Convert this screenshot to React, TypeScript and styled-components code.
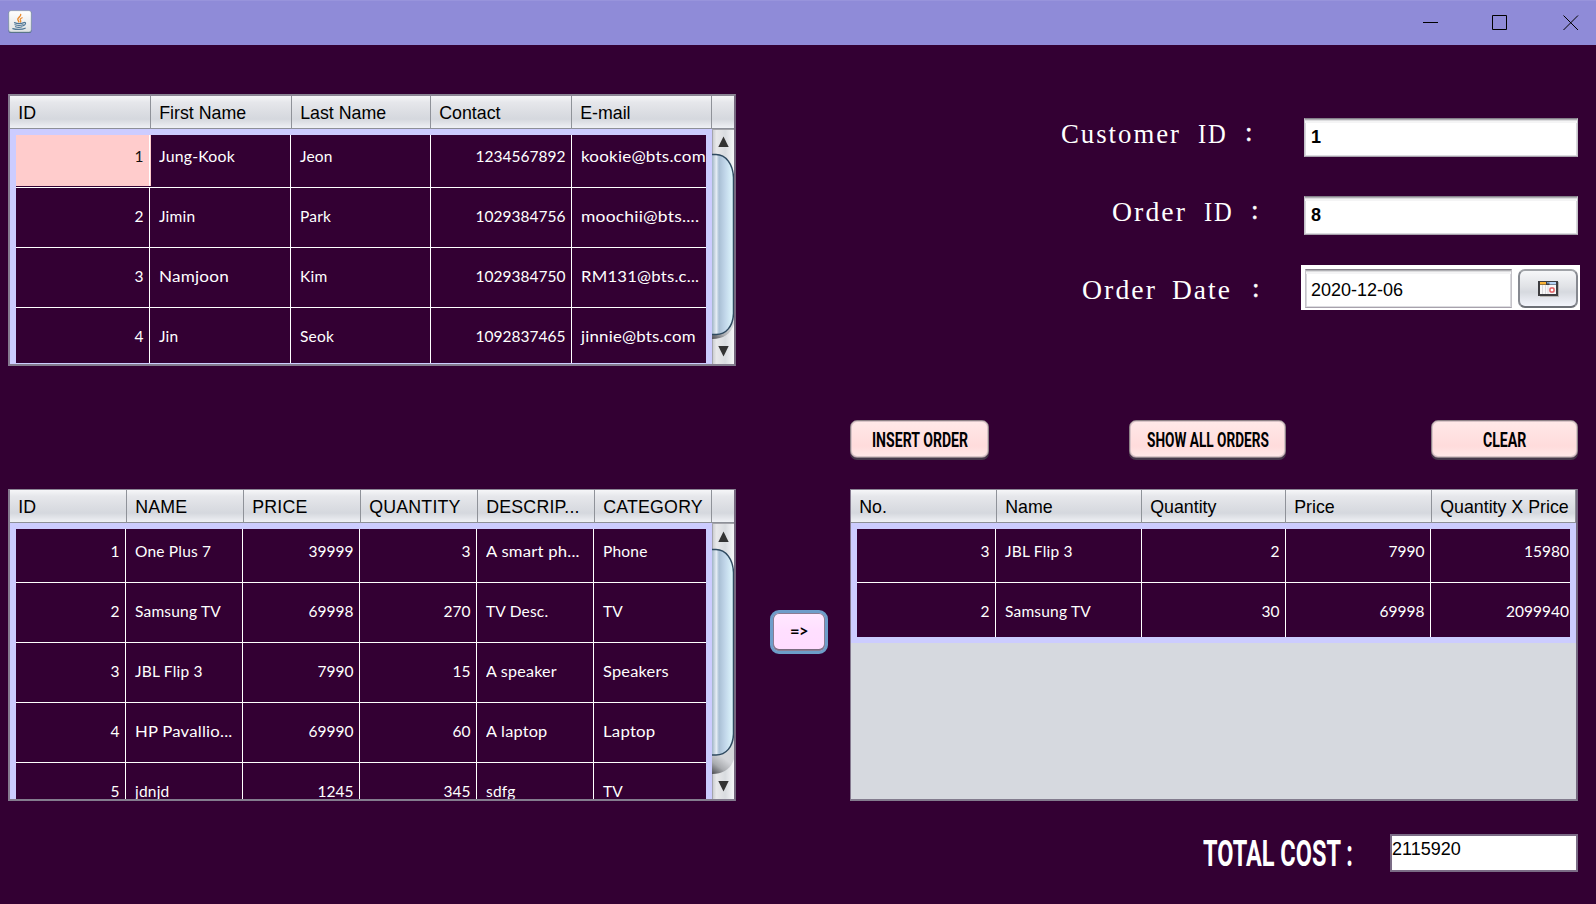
import React, { useLayoutEffect, useRef, useState } from "react";
import styled, { createGlobalStyle, css } from "styled-components";

const GlobalStyle = createGlobalStyle`
  *, *::before, *::after { box-sizing: border-box; }
  body { margin: 0; background: #330033; overflow: hidden; }
`;

const arial = `"Liberation Sans", Arial, sans-serif`;

/* ---------- window frame ---------- */

const Window = styled.div`
  display: flex;
  flex-direction: column;
  width: 1596px;
  height: 904px;
  background: #330033;
  font-family: ${arial};
  font-size: 18px;
  color: #000;
`;

const TitleBar = styled.header`
  display: flex;
  justify-content: space-between;
  flex: none;
  height: 45px;
  padding: 9px 17px 0 8px;
  background: #8f8bd8;
  border-top: 1px solid #9894dc;
`;

const WindowControls = styled.div`
  display: grid;
  grid-template-columns: 69px 71px 16px;
  padding-top: 5px;
`;

const ControlIcon = styled.svg`
  display: block;
  width: 16px;
  height: 16px;
  fill: none;
  stroke: #000;
`;

const Content = styled.main`
  display: flex;
  flex: 1;
  padding-left: 8px;
`;

const LeftColumn = styled.div`
  display: flex;
  flex-direction: column;
  gap: 123px;
  width: 728px;
  padding-top: 49px;
`;

const MiddleColumn = styled.div`
  width: 114px;
  padding: 565px 0 0 34px;
`;

const RightColumn = styled.div`
  display: flex;
  flex-direction: column;
  width: 728px;
  padding-top: 73px;
`;

/* ---------- text stretched to a set width ---------- */

const FitBox = styled.span<{ $w: number; $ml: number }>`
  display: block;
  flex: none;
  width: ${(p) => p.$w}px;
  margin-left: ${(p) => p.$ml}px;
  white-space: pre;
`;

const FitInner = styled.span`
  display: inline-block;
  transform-origin: 0 50%;
`;

function Fit({ width, ml = 0, children }: { width: number; ml?: number; children: string }) {
  const ref = useRef<HTMLSpanElement>(null);
  const [scale, setScale] = useState(1);
  useLayoutEffect(() => {
    if (ref.current) setScale(width / ref.current.offsetWidth);
  }, [width, children]);
  return (
    <FitBox $w={width} $ml={ml}>
      <FitInner ref={ref} style={{ transform: `scaleX(${scale})` }}>
        {children}
      </FitInner>
    </FitBox>
  );
}

/* ---------- tables ---------- */

const Panel = styled.section<{ $h: number; $thinLeft?: boolean; $top: number }>`
  display: flex;
  flex-direction: column;
  flex: none;
  height: ${(p) => p.$h}px;
  background: #d6d9df;
  border: 2px solid #7b6c86;
  border-top-width: ${(p) => p.$top}px;
  border-left-width: ${(p) => (p.$thinLeft ? 1 : 2)}px;
  border-color: #8b8594 #75687f #837c8e #85798f;
`;

const HeaderRow = styled.div<{ $cols: string; $spacing?: number }>`
  display: grid;
  grid-template-columns: ${(p) => p.$cols};
  flex: none;
  height: 33px;
  background: linear-gradient(#f6f6f8 0, #e6e7eb 20%, #dcdee3 50%, #d5d8de 72%, #e4e6eb 88%, #eff1f5 100%);
  border-bottom: 1px solid #8d9098;
  letter-spacing: ${(p) => p.$spacing ?? 0}px;
`;

const HeaderCell = styled.div`
  padding-left: 8.2px;
  line-height: 34px;
  font-size: 17.8px;
  white-space: pre;
  border-right: 1px solid #8f9299;
`;

const Body = styled.div`
  display: flex;
  flex: 1;
  min-height: 0;
`;

const Viewport = styled.div`
  flex: 1;
  min-width: 0;
  overflow: hidden;
`;

const Grid = styled.div<{ $h?: number; $bottom: number }>`
  height: ${(p) => (p.$h ? `${p.$h}px` : "100%")};
  border: solid #ccccff;
  border-width: 6px 6px ${(p) => p.$bottom}px;
  background: #330033;
  overflow: hidden;
`;

const Row = styled.div<{ $cols: string; $lift?: number }>`
  display: grid;
  grid-template-columns: ${(p) => p.$cols};
  height: 60px;
  margin-top: ${(p) => -(p.$lift ?? 0)}px;
  border-bottom: 1px solid #fff;
`;

const Cell = styled.div<{ $num?: boolean; $selected?: boolean; $last?: boolean; $tight?: boolean }>`
  height: ${(p) => (p.$selected ? 58 : 59)}px;
  padding: 0 ${(p) => (p.$tight ? 1 : p.$num ? 5.5 : 0)}px 0 9px;
  border-right: ${(p) => (p.$last ? "0" : "1px solid #fff")};
  font-family: Lato, sans-serif;
  font-size: 15.5px;
  line-height: 57px;
  letter-spacing: ${(p) => (p.$num ? 0 : 0.2)}px;
  text-align: ${(p) => (p.$num ? "right" : "left")};
  white-space: pre;
  color: #fff;
  ${(p) =>
    p.$selected &&
    css`
      background: #ffcccc;
      color: #111;
      box-shadow: 1px 0 0 #ffcccc;
    `}
`;

/* ---------- scroll bar ---------- */

const ScrollSvg = styled.svg`
  display: block;
  flex: none;
  width: 22px;
`;

interface ScrollProps {
  h: number;
  up: number;
  top: number;
  bottom: number;
  shade: number;
  down: number;
}

function ScrollBar({ h, up, top, bottom, shade, down }: ScrollProps) {
  const id = `s${h}`;
  const thumb = `M-2 ${top} H4 C14 ${top} 21 ${top + 10} 21.5 ${top + 23} V${bottom - 21} C21 ${bottom - 8} 14 ${bottom} 4 ${bottom} H-2 Z`;
  return (
    <ScrollSvg viewBox={`0 0 22 ${h}`} height={h}>
      <defs>
        <linearGradient id={`${id}t`} x1="0" x2="1" y1="0" y2="0">
          <stop offset="0" stopColor="#c4c6ca" />
          <stop offset=".2" stopColor="#e8e8ea" />
          <stop offset=".6" stopColor="#d9dce0" />
          <stop offset="1" stopColor="#f6f6f8" />
        </linearGradient>
        <linearGradient id={`${id}b`} gradientUnits="userSpaceOnUse" x1="0" x2="22" y1="0" y2="0">
          <stop offset="0" stopColor="#9fb4c6" />
          <stop offset=".2" stopColor="#e6edf5" />
          <stop offset=".32" stopColor="#a9bfd4" />
          <stop offset=".6" stopColor="#c2d7ea" />
          <stop offset="1" stopColor="#e2fbff" />
        </linearGradient>
        <linearGradient id={`${id}s`} gradientUnits="userSpaceOnUse" x1="0" x2="12" y1={shade} y2={shade - 16}>
          <stop offset="0" stopColor="#4c4c50" />
          <stop offset=".5" stopColor="#a9abaf" />
          <stop offset="1" stopColor="#d4d6da" />
        </linearGradient>
      </defs>
      <rect width="22" height={h} fill={`url(#${id}t)`} />
      <path d={`M0 .5H22M.5 0V${h}`} stroke="#a4a5ab" />
      <path d={`M0 ${bottom - 20} H22 V${shade - 15} C19 ${shade - 5} 11 ${shade} 0 ${shade} Z`} fill={`url(#${id}s)`} />
      <path d={thumb} fill={`url(#${id}b)`} stroke="#2f4a60" strokeWidth="1.5" />
      <path d={`M11.5 ${up} L16.7 ${up + 10.5} H6.3 Z`} fill="#333" />
      <path d={`M11.5 ${down + 10.5} L16.7 ${down} H6.3 Z`} fill="#333" />
    </ScrollSvg>
  );
}

/* ---------- generic data table ---------- */

/* a value, or a value with the width it takes in its cell */
type Value = string | [string, number];

interface TableProps {
  height: number;
  topBorder: number;
  thinLeft?: boolean;
  headers: string[];
  headerCols: string;
  headerSpacing?: number;
  cols: string;
  numeric: boolean[];
  rows: Value[][];
  lift: number;
  gridHeight?: number;
  gridBottom?: number;
  selected?: boolean;
  tightEnd?: boolean;
  scroll?: ScrollProps;
}

function DataTable(t: TableProps) {
  return (
    <Panel $h={t.height} $top={t.topBorder} $thinLeft={t.thinLeft}>
      <HeaderRow $cols={t.headerCols} $spacing={t.headerSpacing}>
        {t.headers.map((h) => (
          <HeaderCell key={h}>{h}</HeaderCell>
        ))}
      </HeaderRow>
      <Body>
        <Viewport>
          <Grid $h={t.gridHeight} $bottom={t.gridBottom ?? 0}>
            {t.rows.map((row, r) => (
              <Row key={r} $cols={t.cols} $lift={r === 0 ? t.lift : 0}>
                {row.map((value, c) => (
                  <Cell
                    key={c}
                    $num={t.numeric[c]}
                    $selected={t.selected && r === 0 && c === 0}
                    $last={c === row.length - 1}
                    $tight={t.tightEnd && c === row.length - 1}
                  >
                    {typeof value === "string" ? value : <Fit width={value[1]}>{value[0]}</Fit>}
                  </Cell>
                ))}
              </Row>
            ))}
          </Grid>
        </Viewport>
        {t.scroll && <ScrollBar {...t.scroll} />}
      </Body>
    </Panel>
  );
}

/* ---------- form ---------- */

const FormRow = styled.div<{ $h: number; $gap: number; $right: number; $mt?: number }>`
  display: flex;
  justify-content: flex-end;
  gap: ${(p) => p.$gap}px;
  height: ${(p) => p.$h}px;
  margin: ${(p) => p.$mt ?? 0}px ${(p) => p.$right}px 0 0;
`;

const Label = styled.div<{ $shift: number }>`
  display: flex;
  gap: 15px;
  margin-top: ${(p) => p.$shift}px;
  height: 32px;
  font: 27px/32px "Liberation Serif", "Times New Roman", serif;
  letter-spacing: 2px;
  color: #fff;
`;

const Colon = styled.div<{ $ml: number }>`
  width: 9px;
  margin-left: ${(p) => p.$ml}px;
  line-height: 29px;
  -webkit-text-stroke: 0.4px #fff;
`;

const Field = styled.div<{ $w: number; $h: number; $bold?: boolean }>`
  width: ${(p) => p.$w}px;
  height: ${(p) => p.$h}px;
  padding-left: ${(p) => (p.$bold ? 6 : 5)}px;
  font-size: 18px;
  font-weight: ${(p) => (p.$bold ? 700 : 400)};
  line-height: ${(p) => p.$h + (p.$bold ? -3 : 1)}px;
  background: #fff;
  border: 1px solid #c4c2c8;
  border-top-color: #85808a;
  border-bottom-color: #a7a1ac;
  box-shadow: inset 0 1px 0 #b0b0b4, inset 0 2px 0 #dcdcde, inset 0 4px 0 #f4f4f5, inset 1px 0 0 #d8d8dc,
    inset -1px 0 0 #d8d8dc, inset 0 -1px 0 #dcdce0;
`;

const DatePanel = styled.div`
  display: flex;
  gap: 6px;
  width: 279px;
  height: 45px;
  padding: 4px 2px 2px 4px;
  background: #fff;
`;

const CalendarButton = styled.button`
  display: flex;
  align-items: center;
  justify-content: center;
  width: 60px;
  height: 39px;
  padding: 0;
  border: 2px solid #83868d;
  border-color: #a0a3a8 #868990 #6c6f76;
  border-radius: 7px;
  background: linear-gradient(#f6f7f9, #e0e2e6 45%, #d6d9df 60%, #f3f5fc);
`;

/* ---------- buttons ---------- */

const ButtonBar = styled.div`
  display: grid;
  grid-template-columns: 279px 302px 147px;
  height: 38px;
  margin-top: 110px;
`;

const PinkButton = styled.button<{ $w: number }>`
  display: flex;
  align-items: center;
  justify-content: center;
  width: ${(p) => p.$w}px;
  height: 38px;
  padding: 1px 0 0;
  border: 1px solid #8e8287;
  border-radius: 7px;
  background: linear-gradient(#ffe9e9, #ffe0e0 45%, #ffdcdc 70%, #ffe8e8);
  box-shadow: 0 2px 0 #45384a, inset 0 0 0 1px #d9c4c8;
  font: 700 21px/30px Roboto, "Liberation Sans", sans-serif;
  color: #000;
`;

const ArrowButton = styled.button`
  width: 58px;
  height: 44px;
  padding: 0 0 2px;
  border: 3px solid #6d9dc9;
  border-radius: 9px;
  background: linear-gradient(#ffe9ff, #ffdfff 45%, #ffdcff);
  box-shadow: inset 0 0 0 1px #8a7c92, inset 0 -1px 0 1px #7a6c80;
  font: 700 16.5px/34px Lato, sans-serif;
  letter-spacing: -0.5px;
  color: #000;
`;

const OrderTable = styled.div`
  margin-top: 31px;
`;

const TotalRow = styled.div`
  display: flex;
  justify-content: flex-end;
  gap: 37px;
  height: 38px;
  margin-top: 33px;
`;

const TotalLabel = styled.div`
  font: 700 36.5px/39px Roboto, "Liberation Sans", sans-serif;
  color: #fff;
`;

const TotalBox = styled.div`
  width: 188px;
  height: 38px;
  border: 2px solid #7b6c86;
  background: #fff;
  font-size: 18px;
  line-height: 27px;
`;

const JavaIcon = () => (
  <svg width="24" height="24" viewBox="0 0 24 24">
    <defs>
      <linearGradient id="jb" x1="0" x2="0" y1="0" y2="1">
        <stop offset="0" stopColor="#fff" />
        <stop offset="1" stopColor="#dfe3e3" />
      </linearGradient>
    </defs>
    <rect x=".5" y=".7" width="23" height="22.4" rx="2.5" fill="#4e6d82" />
    <rect x=".8" y=".7" width="22.4" height="21.2" rx="2.2" fill="url(#jb)" stroke="#8fa0a8" strokeWidth=".5" />
    <g fill="none" strokeLinecap="round">
      <path d="M12.7 4.5c.5 2.3-3.400 2.900-2.900 5.100.2.900.9 1.400 1 2.200" stroke="#e98a2e" strokeWidth="1.400" />
      <path d="M14.200 7.800c-2 .900-2.600 1.700-1.500 2.900.3.500.1.900-.3 1.300" stroke="#e98a2e" strokeWidth="1.200" />
      <path d="M6.500 12.600c2.500 1 7 .9 9.500 0M7 14.700c2.500.8 5.500.8 8 0M7.500 16.700c2 .8 4.500.8 6.500 0M16.300 12.500c2-.5 1.500 2.300-1 3.200M4.800 18.600c3.200 1.200 9.200 1.200 12.400-.4" stroke="#4f7796" strokeWidth="1.200" />
    </g>
  </svg>
);

const CalendarIcon = () => (
  <svg width="21" height="16" viewBox="0 0 21 16">
    <path d="M2 1h19v15H2z" fill="#b8b6b2" />
    <path d="M0 0h20v15H0z" fill="#3d3d40" />
    <path d="M2 4h16v9H2z" fill="#f7f7f7" />
    <path d="M2 1h6v2.500H2z" fill="#f9b234" />
    <path d="M9 1h3v1.500H9z" fill="#7d9fc4" />
    <path d="M11.500 1H18v2.500h-6.500z" fill="#b5d3f5" />
    <path d="M4.500 4v9M7.500 4v9M10 4v9" stroke="#d9d9dc" />
    <rect x="12" y="7" width="4" height="4" rx="1" fill="#fff" stroke="#e05a5e" strokeWidth="1.500" />
  </svg>
);

export default function App() {
  return (
    <Window>
      <GlobalStyle />
      <TitleBar>
        <JavaIcon />
        <WindowControls>
          <ControlIcon viewBox="0 0 16 16">
            <path d="M0 7.500H15" />
          </ControlIcon>
          <ControlIcon viewBox="0 0 16 16">
            <path d="M.5.5H14.500V14.500H.5Z" />
          </ControlIcon>
          <ControlIcon viewBox="0 0 16 16">
            <path d="M.5.5L15 15M15 .5L.5 15" />
          </ControlIcon>
        </WindowControls>
      </TitleBar>
      <Content>
        <LeftColumn>
          <DataTable
            height={272}
            topBorder={2}
            headers={["ID", "First Name", "Last Name", "Contact", "E-mail"]}
            headerCols="141px 141px 139px 141px 140px"
            cols="134px 141px 140px 141px 134px"
            numeric={[true, false, false, true, false]}
            lift={7}
            gridBottom={1}
            selected
            rows={[
              ["1", ["Jung-Kook", 75.5], "Jeon", "1234567892", ["kookie@bts.com", 125]],
              ["2", "Jimin", "Park", "1029384756", ["moochii@bts....", 118]],
              ["3", ["Namjoon", 69.5], "Kim", "1029384750", ["RM131@bts.c...", 118.5]],
              ["4", "Jin", "Seok", "1092837465", ["jinnie@bts.com", 115]],
            ]}
            scroll={{ h: 235, up: 7.5, top: 25.5, bottom: 205.5, shade: 210, down: 217 }}
          />
          <DataTable
            height={312}
            topBorder={1}
            headers={["ID", "NAME", "PRICE", "QUANTITY", "DESCRIP...", "CATEGORY"]}
            headerCols="repeat(6, 117px)"
            headerSpacing={0.2}
            cols="110px repeat(4, 117px) 112px"
            numeric={[true, false, true, true, false, false]}
            lift={6}
            rows={[
              ["1", "One Plus 7", "39999", "3", ["A smart ph...", 93.5], "Phone"],
              ["2", "Samsung TV", "69998", "270", "TV Desc.", "TV"],
              ["3", "JBL Flip 3", "7990", "15", ["A speaker", 70.5], ["Speakers", 65.5]],
              ["4", ["HP Pavallio...", 97], "69990", "60", ["A laptop", 62], ["Laptop", 52]],
              ["5", "jdnjd", "1245", "345", "sdfg", "TV"],
            ]}
            scroll={{ h: 276, up: 8.5, top: 26.5, bottom: 232, shade: 251, down: 258 }}
          />
        </LeftColumn>
        <MiddleColumn>
          <ArrowButton>=&gt;</ArrowButton>
        </MiddleColumn>
        <RightColumn>
          <FormRow $h={39} $gap={50} $right={0}>
            <Label $shift={0}>
              <Fit width={120}>Customer</Fit>
              <Fit width={30} ml={2}>ID</Fit>
              <Colon $ml={2}>:</Colon>
            </Label>
            <Field $w={274} $h={39} $bold>
              1
            </Field>
          </FormRow>
          <FormRow $h={39} $gap={44} $right={0} $mt={39}>
            <Label $shift={0}>
              <Fit width={75}>Order</Fit>
              <Fit width={30} ml={2}>ID</Fit>
              <Colon $ml={2}>:</Colon>
            </Label>
            <Field $w={274} $h={39} $bold>
              8
            </Field>
          </FormRow>
          <FormRow $h={45} $gap={40} $right={-2} $mt={30}>
            <Label $shift={9}>
              <Fit width={75}>Order</Fit>
              <Fit width={60}>Date</Fit>
              <Colon $ml={5}>:</Colon>
            </Label>
            <DatePanel>
              <Field $w={207} $h={39}>
                2020-12-06
              </Field>
              <CalendarButton>
                <CalendarIcon />
              </CalendarButton>
            </DatePanel>
          </FormRow>
          <ButtonBar>
            <PinkButton $w={139}>
              <Fit width={96}>INSERT ORDER</Fit>
            </PinkButton>
            <PinkButton $w={157}>
              <Fit width={122}>SHOW ALL ORDERS</Fit>
            </PinkButton>
            <PinkButton $w={147}>
              <Fit width={43}>CLEAR</Fit>
            </PinkButton>
          </ButtonBar>
          <OrderTable>
            <DataTable
              height={312}
              topBorder={1}
              thinLeft
              headers={["No.", "Name", "Quantity", "Price", "Quantity X Price"]}
              headerCols="146px 145px 144px 146px 144px"
              cols="139px 146px 144px 145px 139px"
              numeric={[true, false, true, true, true]}
              lift={6}
              gridHeight={120}
              gridBottom={6}
              tightEnd
              rows={[
                ["3", "JBL Flip 3", "2", "7990", "15980"],
                ["2", "Samsung TV", "30", "69998", "2099940"],
              ]}
            />
          </OrderTable>
          <TotalRow>
            <TotalLabel>
              <Fit width={150}>TOTAL COST :</Fit>
            </TotalLabel>
            <TotalBox>2115920</TotalBox>
          </TotalRow>
        </RightColumn>
      </Content>
    </Window>
  );
}
